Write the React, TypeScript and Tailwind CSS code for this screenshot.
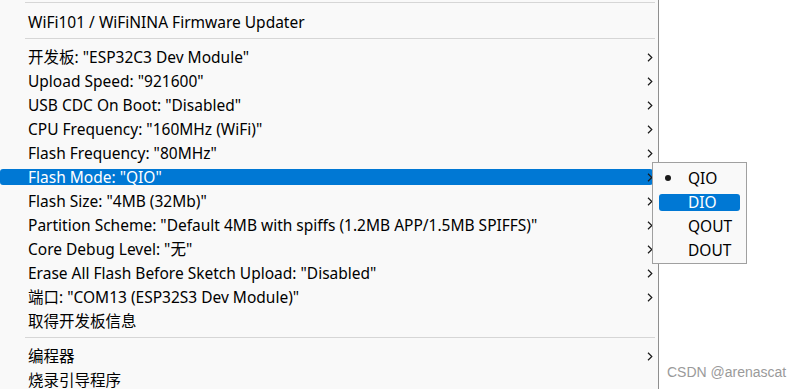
import React from 'react';

const FONT = { fontFamily: '"Noto Sans", "Noto Sans CJK SC", sans-serif' };

interface Row {
  label: string;
  sub?: boolean;
  active?: boolean;
}

const boardRows: Row[] = [
  { label: '开发板: "ESP32C3 Dev Module"', sub: true },
  { label: 'Upload Speed: "921600"', sub: true },
  { label: 'USB CDC On Boot: "Disabled"', sub: true },
  { label: 'CPU Frequency: "160MHz (WiFi)"', sub: true },
  { label: 'Flash Frequency: "80MHz"', sub: true },
  { label: 'Flash Mode: "QIO"', sub: true, active: true },
  { label: 'Flash Size: "4MB (32Mb)"', sub: true },
  { label: 'Partition Scheme: "Default 4MB with spiffs (1.2MB APP/1.5MB SPIFFS)"', sub: true },
  { label: 'Core Debug Level: "无"', sub: true },
  { label: 'Erase All Flash Before Sketch Upload: "Disabled"', sub: true },
  { label: '端口: "COM13 (ESP32S3 Dev Module)"', sub: true },
  { label: '取得开发板信息' },
];

const toolRows: Row[] = [
  { label: '编程器', sub: true },
  { label: '烧录引导程序' },
];

function Chevron() {
  return (
    <svg width="6" height="9" viewBox="0 0 6 9" className="shrink-0">
      <polyline points="1,0.8 4.8,4.5 1,8.2" fill="none" stroke="#1a1a1a" strokeWidth="1.2" />
    </svg>
  );
}

function MenuRow({ row }: { row: Row }) {
  return (
    <div className="h-[24px] flex items-center">
      <div
        className={`h-[16px] w-[653px] flex items-center justify-between rounded-[3px] pl-[28px] ${
          row.active ? 'bg-[#0078d4] text-white' : 'text-black'
        }`}
      >
        <span className="pt-[2px] text-[15.5px] leading-none whitespace-nowrap">{row.label}</span>
        {row.sub && <Chevron />}
      </div>
    </div>
  );
}

function Separator() {
  return <div className="ml-[25px] mr-[3px] h-px bg-[#d6d6d6]" />;
}

const modes = ['QIO', 'DIO', 'QOUT', 'DOUT'];

export default function App() {
  return (
    <div className="relative w-[801px] h-[389px] bg-white overflow-hidden flex" style={FONT}>
      <div className="w-[659px] h-full bg-[#f9f9f9] border-r border-[#8f8f8f] shrink-0 pt-[2px]">
        <Separator />
        <div className="mt-[7px] h-[24px] flex items-center pl-[28px]">
          <span className="pt-[2px] text-[15.5px] leading-none text-black whitespace-nowrap">WiFi101 / WiFiNINA Firmware Updater</span>
        </div>
        <div className="mt-[4px]">
          <Separator />
        </div>
        <div className="mt-[6px]">
          {boardRows.map((r) => (
            <MenuRow key={r.label} row={r} />
          ))}
        </div>
        <div className="mt-[4px]">
          <Separator />
        </div>
        <div className="mt-[6px]">
          {toolRows.map((r) => (
            <MenuRow key={r.label} row={r} />
          ))}
        </div>
      </div>

      <div className="flex-1 flex flex-col justify-end pl-[8px] pb-[6px]">
        <span
          className="text-[14px] text-[#9a9a9a] whitespace-nowrap"
          style={{ fontFamily: '"Liberation Sans", Arial, sans-serif' }}
        >
          CSDN @arenascat
        </span>
      </div>

      {/* Flash Mode submenu */}
      <div className="absolute left-[652px] top-[162px] w-[95px] h-[102px] bg-[#f9f9f9] border border-[#a0a0a0] pt-[3px] px-[6px]">
        {modes.map((m, i) => (
          <div key={m} className="h-[24px] flex items-center">
            <div
              className={`h-[17px] w-full flex items-center rounded-[3px] ${
                i === 1 ? 'bg-[#0078d4] text-white' : 'text-black'
              }`}
            >
              <div className="w-[29px] flex pl-[6px]">
                {i === 0 && <div className="w-[6px] h-[6px] rounded-full bg-[#1a1a1a]" />}
              </div>
              <span className="pt-[2px] text-[15.5px] leading-none">{m}</span>
            </div>
          </div>
        ))}
      </div>
    </div>
  );
}
